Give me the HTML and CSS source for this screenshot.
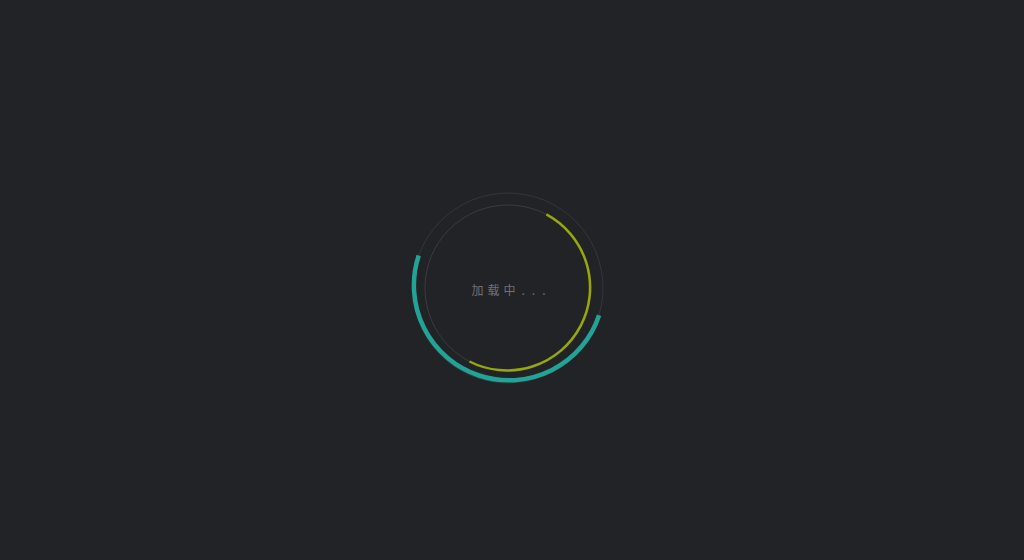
FILE: index.html
```html
<!DOCTYPE html>
<html lang="zh">
<head>
<meta charset="utf-8">
<link rel="stylesheet" href="styles.css">
</head>
<body>
<div class="stage">
  <div class="loader">
    <svg class="rings" width="200" height="200" viewBox="0 0 200 200">
      <circle cx="100" cy="100" r="95" fill="none" stroke="#35363a" stroke-width="1"/>
      <circle cx="100" cy="100" r="83" fill="none" stroke="#3a3b3f" stroke-width="1"/>
      <path d="M 191.1 127.2 A 95 95 0 0 1 10.7 67.5" fill="none" stroke="#22a396" stroke-width="4.5"/>
      <path d="M 138.4 26.4 A 83 83 0 0 1 61.5 173.5" fill="none" stroke="#97a80a" stroke-width="2.5"/>
    </svg>
    <div class="label">加载中<span class="dots">...</span></div>
  </div>
</div>
</body>
</html>
```
FILE: styles.css
```css
html, body {
  margin: 0;
  padding: 0;
  background: #222327;
}
.stage {
  width: 1024px;
  height: 560px;
  display: flex;
  align-items: center;
  justify-content: center;
}
.loader {
  display: grid;
  width: 200px;
  height: 200px;
  margin-top: 15px;
  margin-right: 8px;
}
.rings, .label {
  grid-area: 1 / 1;
}
.rings {
  display: block;
}
.label {
  align-self: center;
  justify-self: center;
  padding-left: 8px;
  margin-top: 4px;
  font-family: "Noto Sans CJK SC", "Noto Sans", sans-serif;
  font-size: 12px;
  line-height: 16px;
  letter-spacing: 4px;
  color: #707175;
}
.dots {
  letter-spacing: 7px;
  padding-left: 2px;
}
```
